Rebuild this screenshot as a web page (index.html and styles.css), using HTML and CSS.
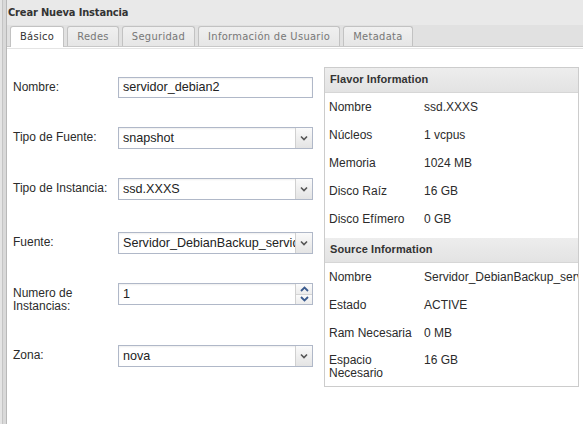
FILE: index.html
```html
<!DOCTYPE html>
<html lang="es">
<head>
<meta charset="utf-8">
<title>Crear Nueva Instancia</title>
<link rel="stylesheet" href="styles.css">
</head>
<body>
<div class="screen">
  <div class="edge"></div>
  <div class="dialog">
    <div class="title">Crear Nueva Instancia</div>
    <div class="tabs">
      <div class="tab active">Básico</div>
      <div class="tab">Redes</div>
      <div class="tab">Seguridad</div>
      <div class="tab">Información de Usuario</div>
      <div class="tab">Metadata</div>
    </div>
    <div class="body">
      <div class="form">
        <div class="row">
          <div class="label">Nombre:</div>
          <div class="input">servidor_debian2</div>
        </div>
        <div class="row">
          <div class="label">Tipo de Fuente:</div>
          <div class="select"><span class="val">snapshot</span><span class="btn"><svg width="8" height="6" viewBox="0 0 8 6"><path d="M1 1.5 L4 4.5 L7 1.5" fill="none" stroke="#555" stroke-width="1.6"/></svg></span></div>
        </div>
        <div class="row">
          <div class="label">Tipo de Instancia:</div>
          <div class="select"><span class="val">ssd.XXXS</span><span class="btn"><svg width="8" height="6" viewBox="0 0 8 6"><path d="M1 1.5 L4 4.5 L7 1.5" fill="none" stroke="#555" stroke-width="1.6"/></svg></span></div>
        </div>
        <div class="row shift">
          <div class="label">Fuente:</div>
          <div class="select"><span class="val">Servidor_DebianBackup_servidor_debian</span><span class="btn"><svg width="8" height="6" viewBox="0 0 8 6"><path d="M1 1.5 L4 4.5 L7 1.5" fill="none" stroke="#555" stroke-width="1.6"/></svg></span></div>
        </div>
        <div class="row">
          <div class="label">Numero de<br>Instancias:</div>
          <div class="select spin"><span class="val">1</span><span class="spinbtns"><span class="half"><svg width="9" height="6" viewBox="0 0 9 6"><path d="M1 5 L4.5 1.5 L8 5" fill="none" stroke="#3b5b8e" stroke-width="1.8"/></svg></span><span class="half"><svg width="9" height="6" viewBox="0 0 9 6"><path d="M1 1 L4.5 4.5 L8 1" fill="none" stroke="#3b5b8e" stroke-width="1.8"/></svg></span></span></div>
        </div>
        <div class="row shift">
          <div class="label">Zona:</div>
          <div class="select"><span class="val">nova</span><span class="btn"><svg width="8" height="6" viewBox="0 0 8 6"><path d="M1 1.5 L4 4.5 L7 1.5" fill="none" stroke="#555" stroke-width="1.6"/></svg></span></div>
        </div>
      </div>
      <div class="info">
        <div class="info-head">Flavor Information</div>
        <table class="info-table flavor">
          <tr><td class="k">Nombre</td><td>ssd.XXXS</td></tr>
          <tr><td class="k">Núcleos</td><td>1 vcpus</td></tr>
          <tr><td class="k">Memoria</td><td>1024 MB</td></tr>
          <tr><td class="k">Disco Raíz</td><td>16 GB</td></tr>
          <tr><td class="k">Disco Efímero</td><td>0 GB</td></tr>
        </table>
        <div class="info-head">Source Information</div>
        <table class="info-table source">
          <tr><td class="k">Nombre</td><td class="nowrap">Servidor_DebianBackup_servidor_debian</td></tr>
          <tr><td class="k">Estado</td><td>ACTIVE</td></tr>
          <tr><td class="k">Ram Necesaria</td><td>0 MB</td></tr>
          <tr class="tall"><td class="k">Espacio<br>Necesario</td><td>16 GB</td></tr>
        </table>
      </div>
    </div>
  </div>
</div>
</body>
</html>
```

FILE: styles.css
```css
html, body {
  margin: 0;
  padding: 0;
  background: #fff;
}
.screen {
  width: 583px;
  height: 424px;
  overflow: hidden;
  display: flex;
  font-family: "Liberation Sans", Arial, sans-serif;
  color: #2b2b2b;
}
.edge {
  width: 7px;
  flex: none;
  background: linear-gradient(to right, #e4e4e4 0, #e4e4e4 2px, #c4c4c4 2px, #c4c4c4 3px, #d9d9d9 3px, #d9d9d9 6px, #b8b8b8 6px, #b8b8b8 7px);
}
.dialog {
  flex: 1;
  display: flex;
  flex-direction: column;
  min-width: 0;
}
.title {
  height: 25px;
  line-height: 25px;
  padding-left: 1px;
  background: #e9e9e9;
  font-family: "DejaVu Sans Condensed", "DejaVu Sans", sans-serif;
  font-stretch: condensed;
  font-weight: bold;
  font-size: 11px;
  letter-spacing: -0.15px;
  color: #333;
}
.tabs {
  height: 21px;
  display: flex;
  align-items: flex-end;
  gap: 3px;
  padding-left: 3px;
  background: #e1e1e1;
  border-bottom: 1px solid #c8c8c8;
}
.tab {
  height: 19px;
  line-height: 19px;
  padding: 0 9px;
  border: 1px solid #c2c2c2;
  border-bottom: none;
  border-radius: 3px 3px 0 0;
  background: linear-gradient(#f0f0f0, #e6e6e6);
  font-family: "DejaVu Sans Condensed", "DejaVu Sans", sans-serif;
  font-stretch: condensed;
  font-size: 11px;
  letter-spacing: 0.32px;
  color: #777;
}
.tab.active {
  background: #fff;
  color: #333;
  height: 20px;
  margin-bottom: -1px;
}
.body {
  flex: 1;
  display: flex;
  align-items: flex-start;
  padding: 18px 0 0 6px;
  border-top: 1px solid #e4e4e4;
  margin-top: 1px;
}
.form {
  width: 300px;
  flex: none;
  padding-top: 10px;
  display: flex;
  flex-direction: column;
  gap: 29px;
}
.row {
  display: flex;
  align-items: flex-start;
}
.row.shift {
  margin-top: 3px;
}
.label {
  width: 105px;
  flex: none;
  padding-top: 4px;
  font-size: 12px;
  line-height: 13px;
}
.input, .select {
  width: 195px;
  height: 21px;
  box-sizing: border-box;
  border: 1px solid #b0b8c8;
  background: #fff;
  box-shadow: inset 0 1px 2px rgba(0,0,0,0.07);
  font-size: 12.6px;
  line-height: 19px;
  padding-left: 4px;
  color: #222;
  white-space: nowrap;
  overflow: hidden;
}
.select {
  height: 22px;
  line-height: 20px;
  display: flex;
  padding-left: 0;
}
.select .val {
  flex: 1;
  min-width: 0;
  overflow: hidden;
  padding-left: 4px;
}
.select .btn {
  width: 16px;
  flex: none;
  border-left: 1px solid #d0d0d0;
  background: linear-gradient(#fafafa, #e4e4e4);
  display: flex;
  align-items: center;
  justify-content: center;
}
.spinbtns {
  width: 16px;
  flex: none;
  display: flex;
  flex-direction: column;
  border-left: 1px solid #d0d0d0;
}
.spinbtns .half {
  flex: 1;
  display: flex;
  align-items: center;
  justify-content: center;
  background: linear-gradient(#fbfbfb, #ececec);
}
.spinbtns .half + .half {
  border-top: 1px solid #d4d4d4;
}
.info {
  width: 255px;
  box-sizing: border-box;
  margin-left: 11px;
  border: 1px solid #cccccc;
  overflow: hidden;
  flex: none;
}
.info-head {
  height: 24px;
  line-height: 23px;
  padding-left: 5px;
  background: linear-gradient(#ededed, #e3e3e3);
  border-bottom: 1px solid #d6d6d6;
  font-size: 11px;
  font-weight: bold;
  letter-spacing: 0.1px;
  color: #333;
}
.info-table {
  border-collapse: collapse;
  font-size: 12px;
  width: 253px;
  table-layout: fixed;
}
.info-table.flavor {
  margin-bottom: 5px;
}
.info-table td {
  height: 28px;
  padding: 0;
  line-height: 13px;
  vertical-align: middle;
  color: #2b2b2b;
}
.info-table td.k {
  width: 95px;
  padding-left: 4px;
}
.info-table td.nowrap {
  white-space: nowrap;
  overflow: hidden;
}
.info-table tr.tall td {
  vertical-align: top;
  padding-top: 7px;
  padding-bottom: 6px;
  height: auto;
}
```
